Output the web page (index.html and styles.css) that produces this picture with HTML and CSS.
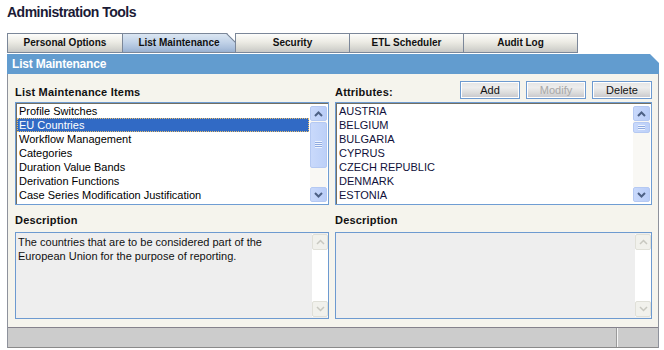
FILE: index.html
```html
<!DOCTYPE html>
<html lang="en">
<head>
    <meta charset="UTF-8">
    <title>Administration Tools</title>
    <link rel="stylesheet" href="styles.css">
</head>
<body>
    <div class="wrap">
        <h1 class="page-title">Administration Tools</h1>

        <div class="tabs">
            <div class="tab">Personal Options</div>
            <div class="tab active">List Maintenance</div>
            <div class="tab">Security</div>
            <div class="tab">ETL Scheduler</div>
            <div class="tab">Audit Log</div>
        </div>

        <div class="panel-head">List Maintenance</div>
        <div class="panel">
            <div class="panel-body">
                <!-- left column -->
                <div class="col">
                    <div class="col-head">
                        <span class="label">List Maintenance Items</span>
                    </div>
                    <div class="listbox">
                        <ul class="items">
                            <li>Profile Switches</li>
                            <li class="selected">EU Countries</li>
                            <li>Workflow Management</li>
                            <li>Categories</li>
                            <li>Duration Value Bands</li>
                            <li>Derivation Functions</li>
                            <li>Case Series Modification Justification</li>
                        </ul>
                        <div class="vscroll">
                            <div class="sb-btn up"><svg width="9" height="6" viewBox="0 0 9 6"><path d="M1 5 L4.5 1.5 L8 5" /></svg></div>
                            <div class="sb-track"><div class="sb-thumb big"></div></div>
                            <div class="sb-btn down"><svg width="9" height="6" viewBox="0 0 9 6"><path d="M1 1 L4.5 4.5 L8 1" /></svg></div>
                        </div>
                    </div>
                    <div class="label desc-label">Description</div>
                    <div class="textbox">
                        <div class="text">The countries that are to be considered part of the European Union for the purpose of reporting.</div>
                        <div class="vscroll off">
                            <div class="sb-btn up"><svg width="9" height="6" viewBox="0 0 9 6"><path d="M1 5 L4.5 1.5 L8 5" /></svg></div>
                            <div class="sb-track"></div>
                            <div class="sb-btn down"><svg width="9" height="6" viewBox="0 0 9 6"><path d="M1 1 L4.5 4.5 L8 1" /></svg></div>
                        </div>
                    </div>
                </div>

                <!-- right column -->
                <div class="col">
                    <div class="col-head">
                        <span class="label">Attributes:</span>
                        <div class="btns">
                            <button class="btn">Add</button>
                            <button class="btn" disabled>Modify</button>
                            <button class="btn">Delete</button>
                        </div>
                    </div>
                    <div class="listbox">
                        <ul class="items caps">
                            <li>AUSTRIA</li>
                            <li>BELGIUM</li>
                            <li>BULGARIA</li>
                            <li>CYPRUS</li>
                            <li>CZECH REPUBLIC</li>
                            <li>DENMARK</li>
                            <li>ESTONIA</li>
                        </ul>
                        <div class="vscroll">
                            <div class="sb-btn up"><svg width="9" height="6" viewBox="0 0 9 6"><path d="M1 5 L4.5 1.5 L8 5" /></svg></div>
                            <div class="sb-track"><div class="sb-thumb small"></div></div>
                            <div class="sb-btn down"><svg width="9" height="6" viewBox="0 0 9 6"><path d="M1 1 L4.5 4.5 L8 1" /></svg></div>
                        </div>
                    </div>
                    <div class="label desc-label">Description</div>
                    <div class="textbox">
                        <div class="text"></div>
                        <div class="vscroll off">
                            <div class="sb-btn up"><svg width="9" height="6" viewBox="0 0 9 6"><path d="M1 5 L4.5 1.5 L8 5" /></svg></div>
                            <div class="sb-track"></div>
                            <div class="sb-btn down"><svg width="9" height="6" viewBox="0 0 9 6"><path d="M1 1 L4.5 4.5 L8 1" /></svg></div>
                        </div>
                    </div>
                </div>
            </div>
            <div class="panel-foot">
                <div class="foot-main"></div>
                <div class="foot-side"></div>
            </div>
        </div>
    </div>
</body>
</html>
```

FILE: styles.css
```css
body {
    margin: 0;
    background: #fff;
    font-family: "Liberation Sans", Arial, sans-serif;
    font-size: 11px;
    color: #000;
}
.wrap {
    width: 652px;
    padding-left: 7px;
}
.page-title {
    margin: 0 0 12px;
    padding-top: 3px;
    font-size: 14px;
    line-height: 18px;
    letter-spacing: -0.5px;
    color: #1b1b36;
}

/* tabs */
.tabs {
    display: flex;
    height: 20px;
    margin-bottom: 1px;
}
.tab {
    position: relative;
    box-sizing: border-box;
    width: 115px;
    margin-left: -1px;
    border: 1px solid #7b8799;
    background: linear-gradient(#fdfdfb, #ecebe4 45%, #d9d9d3 75%, #c8c8c6);
    font-size: 10px;
    font-weight: bold;
    line-height: 18px;
    text-align: center;
    color: #111;
}
.tab:first-child {
    width: 116px;
    margin-left: 0;
}
.tab.active {
    width: 114px;
    background: linear-gradient(#dbe6f2, #c2d3e8 45%, #aabfdb 80%, #98b0d0);
    clip-path: polygon(0 0, calc(100% - 9px) 0, 100% 9px, 100% 100%, 0 100%);
    z-index: 1;
}
.tab.active::after {
    content: "";
    position: absolute;
    top: -1px;
    right: -1px;
    width: 10px;
    height: 10px;
    background: linear-gradient(to bottom left, transparent 43%, #7b8799 50%, transparent 57%);
}

/* panel */
.panel-head {
    box-sizing: border-box;
    height: 20px;
    padding-left: 5px;
    background: #629ccf;
    color: #fff;
    font-size: 12px;
    font-weight: bold;
    line-height: 20px;
    letter-spacing: -0.2px;
    clip-path: polygon(0 0, calc(100% - 9px) 0, 100% 9px, 100% 100%, 0 100%);
}
.panel {
    box-sizing: border-box;
    border-left: 1px solid #8e929c;
    border-right: 1px solid #8e929c;
    background: #f5f4ed;
}
.panel-body {
    display: grid;
    grid-template-columns: 314px 317px;
    column-gap: 6px;
    padding: 7px 6px 8px 7px;
}
.col-head {
    display: flex;
    justify-content: space-between;
    align-items: flex-end;
    height: 18px;
    margin-bottom: 3px;
}
.label {
    font-weight: bold;
    line-height: 14px;
    letter-spacing: 0.2px;
    color: #111;
}
.desc-label {
    display: block;
    margin: 8px 0 5px;
}

/* buttons */
.btns {
    display: flex;
    gap: 6px;
    align-self: stretch;
}
.btn {
    box-sizing: border-box;
    width: 60px;
    height: 18px;
    padding: 0;
    border: 1px solid #6d9ad0;
    background: linear-gradient(#e4e4e4, #ededed 35%, #dadada 70%, #c6c6cc);
    box-shadow: inset 0 0 0 1px #fff;
    font-family: inherit;
    font-size: 11px;
    line-height: 14px;
    color: #111;
}
.btn:disabled {
    color: #a8a8a8;
}

/* list boxes */
.listbox {
    box-sizing: border-box;
    display: flex;
    height: 103px;
    padding: 1px 0 0 1px;
    border: 1px solid #6f9dd3;
    background: #fff;
    box-shadow: inset 1px 1px 0 #716f64;
}
.items {
    flex: 1;
    margin: 0;
    padding: 0;
    list-style: none;
}
.items li {
    height: 14px;
    padding-left: 2px;
    line-height: 14px;
    white-space: nowrap;
}
.items li.selected {
    background: #316ac5;
    color: #fff;
    outline: 1px dotted #e8c070;
    outline-offset: -1px;
}
.caps li {
    color: #10103a;
}

/* fake scrollbars */
.vscroll {
    display: flex;
    flex-direction: column;
    width: 17px;
    margin: 2px 1px 2px 1px;
}
.sb-btn {
    display: flex;
    align-items: center;
    justify-content: center;
    box-sizing: border-box;
    height: 15px;
    border: 1px solid #b5c9f2;
    border-radius: 2px;
    background: linear-gradient(to right, #c9d9fb, #b9cdf8);
}
.sb-btn path {
    fill: none;
    stroke: #4d6185;
    stroke-width: 2;
}
.sb-track {
    flex: 1;
    padding: 1px 0;
    background: #f9f8f4;
}
.sb-thumb {
    position: relative;
    box-sizing: border-box;
    border: 1px solid #b5c9f2;
    border-radius: 2px;
    background: linear-gradient(to right, #c9d9fb, #bcd0f8);
}
.sb-thumb.big {
    height: 46px;
}
.sb-thumb.small {
    height: 11px;
}
.sb-thumb::after {
    content: "";
    position: absolute;
    left: 4px;
    right: 4px;
    top: 50%;
    height: 7px;
    margin-top: -4px;
    background: repeating-linear-gradient(#eef4fe 0 1px, #8faae0 1px 2px);
}
.sb-thumb.small::after {
    height: 5px;
    margin-top: -3px;
}

/* description boxes */
.textbox {
    box-sizing: border-box;
    display: flex;
    height: 87px;
    border: 1px solid #6d9ad0;
    background: #eeeeee;
}
.text {
    flex: 1;
    padding: 2px 2px 0;
    line-height: 14px;
    color: #111;
}
.vscroll.off {
    width: 16px;
    margin: 1px 0 1px;
    background: #fff;
}
.vscroll.off .sb-btn {
    height: 16px;
    border-color: #e0e0d8;
    background: #f1f1ec;
}
.vscroll.off .sb-btn path {
    stroke: #c8c8c0;
    stroke-width: 1.5;
}
.vscroll.off .sb-track {
    background: #fff;
}

/* footer */
.panel-foot {
    display: flex;
    height: 21px;
    box-sizing: border-box;
    border-top: 1px solid #85828c;
    border-bottom: 1px solid #8a8a8a;
    background: #cccccc;
}
.foot-main {
    flex: 1;
}
.foot-side {
    width: 40px;
    border-left: 1px solid #f6f6f6;
    box-shadow: -1px 0 0 #9a9a9a;
}
```
